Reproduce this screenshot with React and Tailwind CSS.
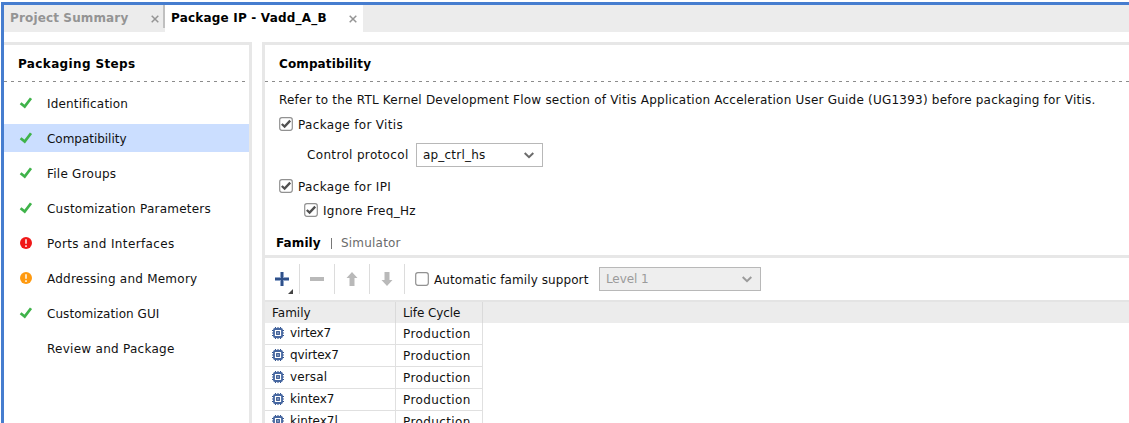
import React from "react";

function Check() {
  return (
    <svg width="14" height="14" viewBox="0 0 14 14" fill="none" stroke="#3fb34a" strokeWidth="2.7">
      <path d="M1.6 7.2L5.7 10.6L12 2.2" />
    </svg>
  );
}

function Alert({ color }) {
  return (
    <svg width="14" height="14" viewBox="0 0 14 14">
      <circle cx="7" cy="7" r="6" fill={color} />
      <path d="M7 3.2V7.7M7 9.2V10.9" stroke="#fff" strokeOpacity="0.85" strokeWidth="1.7" />
    </svg>
  );
}

function Close() {
  return (
    <svg className="shrink-0" width="8" height="8" viewBox="0 0 8 8" stroke="#949494" strokeWidth="1.5">
      <path d="M0.7 0.7L7.3 7.3M7.3 0.7L0.7 7.3" />
    </svg>
  );
}

function CheckBox({ checked }) {
  return (
    <svg className="shrink-0" width="14" height="14" viewBox="0 0 14 14" fill="none">
      <rect x="0.7" y="0.7" width="12.6" height="12.6" rx="2.2" fill="#fff" stroke="#919191" strokeWidth="1.2" />
      {checked && <path d="M2.8 7L5.6 9.6L11.2 3.6" stroke="#505050" strokeWidth="2.3" />}
    </svg>
  );
}

function Chevron({ color }) {
  return (
    <svg width="10" height="7" viewBox="0 0 10 7" fill="none" stroke={color} strokeWidth="2">
      <path d="M0.7 1L5 5.2L9.3 1" />
    </svg>
  );
}

function Chip() {
  return (
    <svg className="shrink-0" width="12" height="12" viewBox="0 0 12 12" fill="none">
      <path d="M3.5 0V2M6 0V2M8.5 0V2M3.5 10V12M6 10V12M8.5 10V12M0 3.5H2M0 6H2M0 8.5H2M10 3.5H12M10 6H12M10 8.5H12" stroke="#36568f" strokeWidth="1.1" />
      <rect x="2" y="2" width="8" height="8" rx="0.8" stroke="#4566a0" strokeWidth="1.8" />
      <rect x="4.6" y="4.6" width="2.8" height="2.8" fill="#8ba0c5" stroke="#36568f" strokeWidth="1" />
    </svg>
  );
}

function Dashes() {
  return <div className="h-px bg-[repeating-linear-gradient(90deg,#8c8c8c_0_3px,transparent_3px_7px)]" />;
}

const steps = [
  ["Identification", "ok", "tracking-[0.17px]"],
  ["Compatibility", "ok", "tracking-[-0.03px]"],
  ["File Groups", "ok", "tracking-[0.24px]"],
  ["Customization Parameters", "ok", "tracking-[0.23px]"],
  ["Ports and Interfaces", "error", "tracking-[0.37px]"],
  ["Addressing and Memory", "warn", "tracking-[0.24px]"],
  ["Customization GUI", "ok", "tracking-[0.06px]"],
  ["Review and Package", "", "tracking-[0.27px]"],
];

const families = [
  ["virtex7", "tracking-[-0.15px]"],
  ["qvirtex7", "tracking-[-0.1px]"],
  ["versal", "tracking-[0.15px]"],
  ["kintex7", "tracking-[0px]"],
  ["kintex7l", "tracking-[0px]"],
];

export default function App() {
  return (
    <div className="h-[423px] w-[1129px] overflow-hidden bg-white pl-px pt-[2px] font-['DejaVu_Sans',sans-serif] text-[12px] leading-[16px] tracking-[0.2px] whitespace-nowrap text-[#111]">
      <div className="flex h-[421px] flex-col border-l-[3px] border-t-[3px] border-[#467dcf]">
        <div className="flex h-[27px] shrink-0 bg-[#ececec] font-bold">
          <div className="flex h-[23px] w-[161px] items-center justify-between border-r-2 border-[#c0c0c0] pl-[6px] pr-[4px] pt-[3px] text-[#949494]">
            <span className="tracking-[0.14px]">Project Summary</span>
            <div className="pt-px"><Close /></div>
          </div>
          <div className="flex h-[27px] w-[198px] items-center justify-between bg-white pl-[6px] pr-[6px] pb-px text-black">
            <span>Package IP - Vadd_A_B</span>
            <div className="pt-px"><Close /></div>
          </div>
        </div>

        <div className="flex min-h-0 flex-1 gap-[10px] pt-[10px]">
          <div className="w-[248px] shrink-0 border-r-[3px] border-t-[3px] border-[#e7e7e7]">
            <div className="flex h-[36px] items-center pl-[14px] pt-[2px] font-bold tracking-[0.37px] text-black">Packaging Steps</div>
            <Dashes />
            <div className="flex flex-col gap-[7px] pt-[7px]">
              {steps.map(([name, state, tracking]) => (
                <div
                  key={name}
                  className={name === "Compatibility" ? "flex h-[28px] items-center bg-[#cbdeff] pl-[15px]" : "flex h-[28px] items-center pl-[15px]"}
                >
                  <div className="w-[28px]">
                    {state === "ok" && <Check />}
                    {state === "error" && <Alert color="#f01818" />}
                    {state === "warn" && <Alert color="#ff9a10" />}
                  </div>
                  <span className={"pt-px " + tracking}>{name}</span>
                </div>
              ))}
            </div>
          </div>

          <div className="flex min-w-0 flex-1 flex-col border-l-[3px] border-t-[3px] border-[#e7e7e7]">
            <div className="flex h-[36px] shrink-0 items-center pl-[14px] pt-[2px] font-bold tracking-[0.12px] text-black">Compatibility</div>
            <div className="shrink-0"><Dashes /></div>
            <div className="h-[152px] shrink-0 pl-[14px] pt-[10px]">
              <p className="tracking-[0.216px]">Refer to the RTL Kernel Development Flow section of Vitis Application Acceleration User Guide (UG1393) before packaging for Vitis.</p>
              <div className="mt-[8px] flex h-[16px] items-center gap-[5px] tracking-[0.33px]">
                <CheckBox checked />
                <span className="pt-[2px]">Package for Vitis</span>
              </div>
              <div className="mt-[11px] flex h-[24px] items-center pl-[28px]">
                <span className="w-[109px] tracking-[0.34px]">Control protocol</span>
                <div className="flex h-[24px] w-[127px] items-center justify-between border border-[#b8b8b8] pl-[6px] pr-[8px]">
                  ap_ctrl_hs
                  <Chevron color="#6b6b6b" />
                </div>
              </div>
              <div className="mt-[11px] flex h-[16px] items-center gap-[5px] tracking-[0.33px]">
                <CheckBox checked />
                <span className="pt-[2px]">Package for IPI</span>
              </div>
              <div className="mt-[8px] flex h-[16px] items-center gap-[5px] pl-[25px] tracking-[0.27px]">
                <CheckBox checked />
                <span className="pt-[2px]">Ignore Freq_Hz</span>
              </div>
            </div>
            <div className="flex h-[21px] shrink-0 items-center pb-[3px] pl-[11px]">
              <span className="w-[55px] font-bold tracking-[0.1px] text-black">Family</span>
              <div className="mr-[9px] h-[11px] w-px bg-[#777]" />
              <span className="text-[#6b6b6b]">Simulator</span>
            </div>
            <div className="h-[3px] shrink-0 bg-[#e7e7e7]" />
            <div className="flex h-[42px] shrink-0 items-center">
              <div className="flex h-[30px] w-[35px] items-center border-r border-[#dcdcdc]">
                <svg width="34" height="30" viewBox="0 0 34 30">
                  <path d="M10 15H24M17 8V22" stroke="#8fa5c9" strokeWidth="4" />
                  <path d="M10 15H24M17 8V22" stroke="#2f5089" strokeWidth="2" />
                  <path d="M28 25V30H23Z" fill="#444" />
                </svg>
              </div>
              <div className="flex h-[30px] w-[35px] items-center justify-center border-r border-[#dcdcdc]">
                <div className="h-[4px] w-[14px] bg-[#b9b9b9]" />
              </div>
              <div className="flex h-[30px] w-[35px] items-center justify-center border-r border-[#dcdcdc]">
                <svg width="12" height="14" viewBox="0 0 12 14" fill="#b9b9b9"><path d="M6 0L11.5 6H8.5V14H3.5V6H0.5Z" /></svg>
              </div>
              <div className="flex h-[30px] w-[35px] items-center justify-center border-r border-[#dcdcdc]">
                <svg width="12" height="14" viewBox="0 0 12 14" fill="#b9b9b9"><path d="M6 14L11.5 8H8.5V0H3.5V8H0.5Z" /></svg>
              </div>
              <div className="flex w-[184px] items-center gap-[5px] pl-[10px] tracking-[0.09px]">
                <CheckBox />
                <span className="pt-[2px]">Automatic family support</span>
              </div>
              <div className="ml-[10px] flex h-[24px] w-[162px] items-center justify-between border border-[#b8b8b8] bg-[#eeeeee] pl-[6px] pr-[8px] tracking-[-0.1px] text-[#9b9b9b]">
                Level 1
                <Chevron color="#9b9b9b" />
              </div>
            </div>
            <div className="flex h-[23px] shrink-0 border-t-2 border-[#e4e4e4] bg-[#ececec]">
              <div className="w-[131px] border-r border-[#dadada] pl-[7px] pt-[3px] tracking-[0px]">Family</div>
              <div className="w-[87px] border-r border-[#dadada] pl-[7px] pt-[3px] tracking-[-0.1px]">Life Cycle</div>
            </div>
            {families.map(([name, tracking]) => (
              <div key={name} className="flex h-[22px] w-[218px] shrink-0 border-b border-[#e0e0e0]">
                <div className="flex w-[131px] items-center gap-[6px] border-r border-[#e0e0e0] pb-px pl-[7px]">
                  <Chip />
                  <span className={tracking}>{name}</span>
                </div>
                <div className="flex w-[87px] items-center border-r border-[#e0e0e0] pl-[7px] pt-px tracking-[0.4px]">Production</div>
              </div>
            ))}
          </div>
        </div>
      </div>
    </div>
  );
}
